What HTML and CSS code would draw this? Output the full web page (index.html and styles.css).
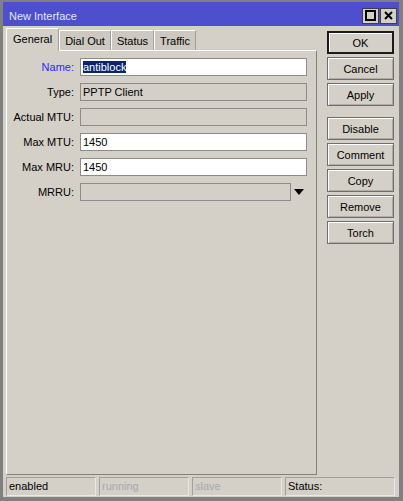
FILE: index.html
```html
<!DOCTYPE html>
<html>
<head>
<meta charset="utf-8">
<link rel="stylesheet" href="styles.css">
</head>
<body>
<div class="window">
  <div class="titlebar">
    <span class="title">New Interface</span>
    <div class="tbtns">
      <span class="tbtn"><svg width="11" height="11" viewBox="0 0 11 11"><rect x="1" y="1" width="9" height="9" fill="none" stroke="#000" stroke-width="2"/></svg></span>
      <span class="tbtn"><svg width="11" height="11" viewBox="0 0 11 11"><path d="M2 2L9 9M9 2L2 9" stroke="#000" stroke-width="2"/></svg></span>
    </div>
  </div>
  <div class="main">
    <div class="left">
      <div class="tabs">
        <div class="tab active">General</div>
        <div class="tab">Dial Out</div>
        <div class="tab">Status</div>
        <div class="tab">Traffic</div>
      </div>
      <div class="panel">
        <div class="form">
          <label class="lbl blue">Name:</label>
          <div class="field white"><span class="sel">antiblock</span></div>
          <label class="lbl">Type:</label>
          <div class="field ro">PPTP Client</div>
          <label class="lbl">Actual MTU:</label>
          <div class="field ro"></div>
          <label class="lbl">Max MTU:</label>
          <div class="field white">1450</div>
          <label class="lbl">Max MRU:</label>
          <div class="field white">1450</div>
          <label class="lbl">MRRU:</label>
          <div class="combo">
            <div class="field ro short"></div>
            <svg class="arrow" width="10" height="6" viewBox="0 0 10 6"><path d="M0 0H10L5 6Z" fill="#000"/></svg>
          </div>
        </div>
      </div>
    </div>
    <div class="right">
      <div class="btn default">OK</div>
      <div class="btn">Cancel</div>
      <div class="btn">Apply</div>
      <div class="btn sep">Disable</div>
      <div class="btn">Comment</div>
      <div class="btn">Copy</div>
      <div class="btn">Remove</div>
      <div class="btn">Torch</div>
    </div>
  </div>
  <div class="statusbar">
    <div class="cell c1">enabled</div>
    <div class="cell c1 dim">running</div>
    <div class="cell c1 dim">slave</div>
    <div class="cell c2">Status:</div>
  </div>
</div>
</body>
</html>
```

FILE: styles.css
```css
html, body {
  margin: 0;
  padding: 0;
  background: #d4d0c8;
}
body {
  font-family: "Liberation Sans", Arial, sans-serif;
  font-size: 11px;
  color: #000;
}
.window {
  width: 403px;
  height: 501px;
  box-sizing: border-box;
  border-style: solid;
  border-color: #808080;
  border-width: 2px 4px 4px 3px;
  background: #d4d0c8;
  display: flex;
  flex-direction: column;
}
.titlebar {
  height: 24px;
  background: #4d4fcc;
  display: flex;
  align-items: center;
  justify-content: space-between;
  padding: 0 2px 0 6px;
  flex: none;
}
.title {
  color: #e4e4ff;
  font-size: 11px;
  padding-top: 4px;
}
.tbtns {
  display: flex;
  gap: 1px;
  margin-top: 3px;
}
.tbtn {
  width: 15px;
  height: 14px;
  background: #d4d0c8;
  border: 1px solid #404040;
  display: flex;
  align-items: center;
  justify-content: center;
}
.main {
  flex: 1;
  display: flex;
  padding: 2px 0 0 3px;
  gap: 10px;
}
.left {
  width: 311px;
  display: flex;
  flex-direction: column;
}
.tabs {
  display: flex;
  height: 22px;
  align-items: flex-end;
}
.tab {
  height: 20px;
  box-sizing: border-box;
  padding: 4px 5px 0 5px;
  border: 1px solid #a0a0a0;
  border-bottom: none;
  border-top-color: #ffffff;
  border-left-color: #ffffff;
  background: #cdc9c1;
}
.tab.active {
  height: 23px;
  margin-bottom: -1px;
  padding: 4px 6px 0 6px;
  background: #d4d0c8;
  position: relative;
  z-index: 1;
}
.panel {
  flex: 1;
  border: 1px solid #808080;
  border-top-color: #ffffff;
  border-left-color: #ffffff;
  margin-bottom: 1px;
}
.form {
  display: grid;
  grid-template-columns: 67px 227px;
  column-gap: 6px;
  row-gap: 7px;
  padding-top: 7px;
  align-items: center;
}
.lbl {
  text-align: right;
}
.lbl.blue {
  color: #2626ff;
}
.field {
  height: 18px;
  box-sizing: border-box;
  border: 1px solid #8c8c8c;
  padding: 1px 0 0 2px;
  line-height: 15px;
  white-space: nowrap;
}
.field.white {
  background: #ffffff;
}
.field.ro {
  background: #d4d0c8;
}
.sel {
  background: #0a246a;
  color: #fff;
}
.combo {
  display: flex;
  align-items: center;
}
.field.short {
  width: 211px;
}
.arrow {
  margin-left: 3px;
}
.right {
  width: 67px;
  display: flex;
  flex-direction: column;
  gap: 3px;
  padding-top: 3px;
}
.btn {
  height: 23px;
  box-sizing: border-box;
  border: 1px solid #6e6e6e;
  box-shadow: inset 1px 1px 0 #ffffff, inset -1px -1px 0 #b0aca4;
  display: flex;
  align-items: center;
  justify-content: center;
}
.btn.default {
  border: 2px solid #1a1a1a;
  box-shadow: inset 1px 1px 0 #ffffff;
  height: 23px;
}
.btn.sep {
  margin-top: 8px;
}
.statusbar {
  height: 20px;
  display: flex;
  gap: 3px;
  padding: 1px 0 0 3px;
  flex: none;
}
.cell {
  height: 19px;
  box-sizing: border-box;
  border: 1px solid #a0a0a0;
  border-right-color: #e8e8e8;
  border-bottom-color: #e8e8e8;
  padding: 2px 0 0 2px;
}
.c1 {
  width: 90px;
}
.c2 {
  width: 110px;
}
.dim {
  color: #a8a8a8;
}
```
